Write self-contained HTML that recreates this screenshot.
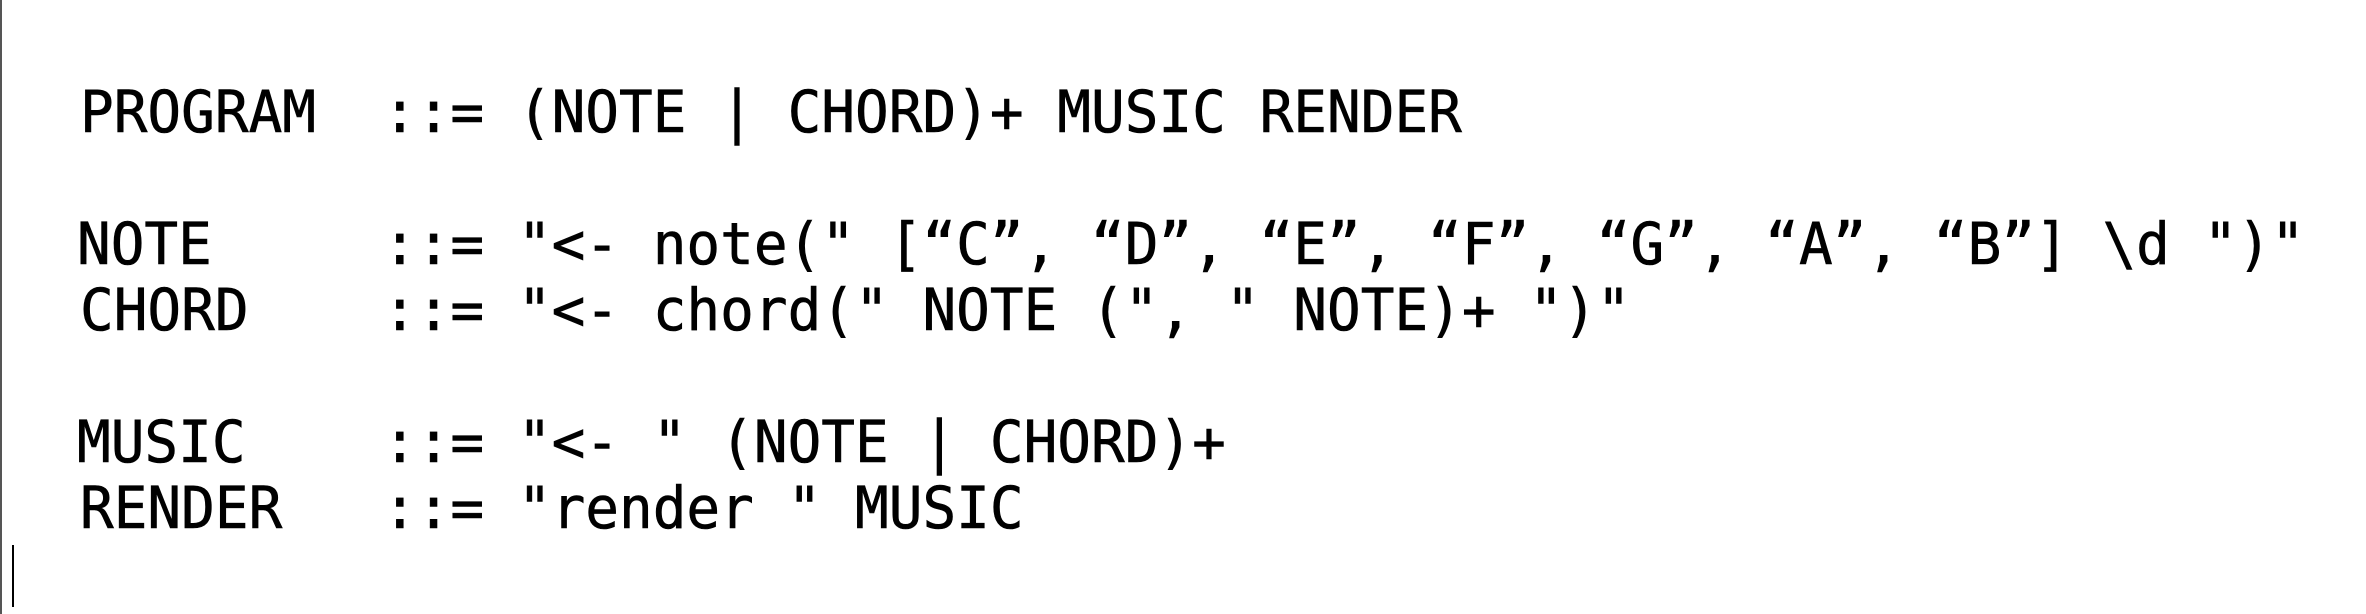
<!DOCTYPE html>
<html><head><meta charset="utf-8"><style>
html,body{margin:0;padding:0;background:#fff;width:2366px;height:614px;overflow:hidden;position:relative}
.l{position:absolute;font-family:"DejaVu Sans Mono","Liberation Mono",monospace;font-size:56px;line-height:56px;white-space:pre;color:#000;transform:scaleY(1.04);transform-origin:0 0;-webkit-text-stroke:0.6px #000}
.r{left:383px}
#edge{position:absolute;left:0;top:0;width:2px;height:614px;background:#555}
#cur{position:absolute;left:12px;top:545px;width:2px;height:62px;background:#000}
</style></head><body>
<div id="edge"></div>
<div class="l" style="left:80px;top:84px">PROGRAM</div><div class="l r" style="top:84px">::= (NOTE | CHORD)+ MUSIC RENDER</div>
<div class="l" style="left:77px;top:216px">NOTE</div><div class="l r" style="top:216px">::= "&lt;- note(" [“C”, “D”, “E”, “F”, “G”, “A”, “B”] \d ")"</div>
<div class="l" style="left:80px;top:282px">CHORD</div><div class="l r" style="top:282px">::= "&lt;- chord(" NOTE (", " NOTE)+ ")"</div>
<div class="l" style="left:77px;top:414px">MUSIC</div><div class="l r" style="top:414px">::= "&lt;- " (NOTE | CHORD)+</div>
<div class="l" style="left:80px;top:480px">RENDER</div><div class="l r" style="top:480px">::= "render " MUSIC</div>
<div id="cur"></div>
</body></html>
